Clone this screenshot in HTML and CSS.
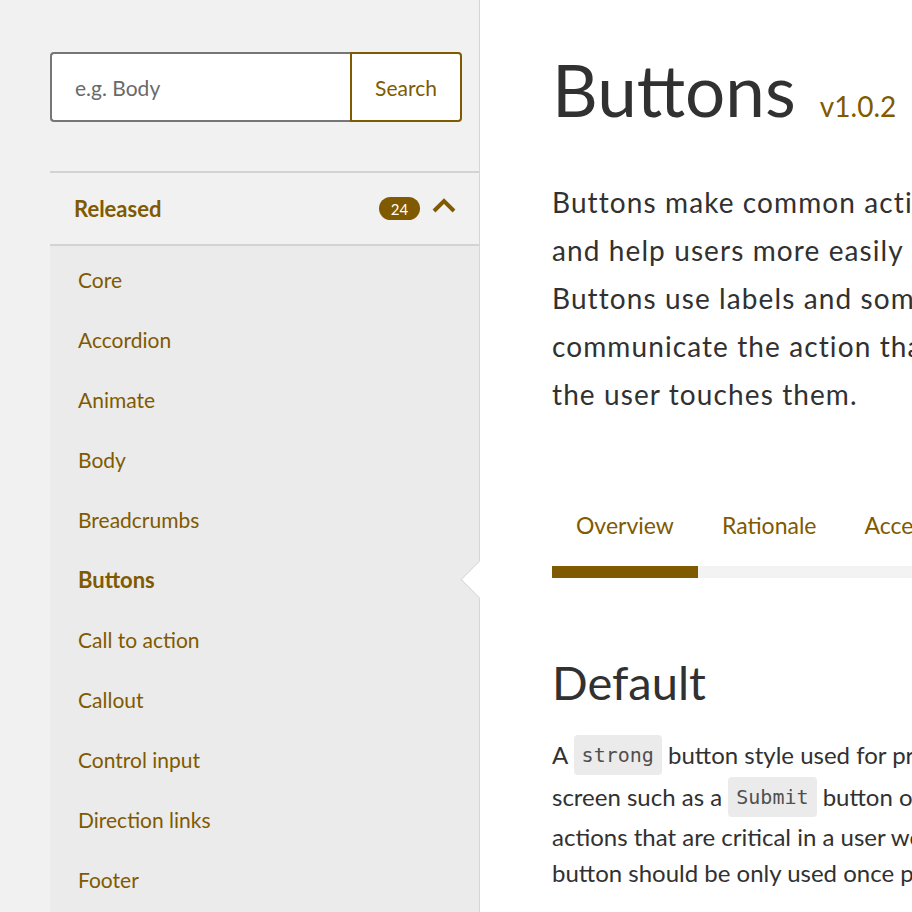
FILE: index.html
```html
<!DOCTYPE html>
<html lang="en">
<head>
<meta charset="utf-8">
<title>Buttons</title>
<link rel="stylesheet" href="styles.css">
</head>
<body>
<div class="page">
  <aside class="sidebar">
    <form class="search">
      <input class="search-input" type="text" placeholder="e.g. Body">
      <button class="search-btn" type="button">Search</button>
    </form>
    <nav class="nav">
      <div class="nav-head">
        <span class="nav-title">Released</span>
        <span class="badge">24</span>
        <svg class="chev" width="24" height="16" viewBox="0 0 24 16"><path d="M2 14 L12 4 L22 14" fill="none" stroke="#805a00" stroke-width="4"/></svg>
      </div>
      <ul class="nav-list">
        <li>Core</li>
        <li>Accordion</li>
        <li>Animate</li>
        <li>Body</li>
        <li>Breadcrumbs</li>
        <li class="active">Buttons</li>
        <li>Call to action</li>
        <li>Callout</li>
        <li>Control input</li>
        <li>Direction links</li>
        <li>Footer</li>
        <li>Grid 12</li>
        <li>Header</li>
      </ul>
    </nav>
  </aside>
  <main class="main">
    <h1 class="title">Buttons <span class="version">v1.0.2</span></h1>
    <p class="intro">Buttons make common actions more obvious<br>and help users more easily perform them.<br>Buttons use labels and sometimes icons to<br>communicate the action that will occur when<br>the user touches them.</p>
    <div class="tabs">
      <span class="tab active">Overview</span>
      <span class="tab">Rationale</span>
      <span class="tab">Accessibility</span>
    </div>
    <h2 class="h2">Default</h2>
    <p class="body">A <code>strong</code> button style used for primary actions on a<br>screen such as a <code>Submit</code> button or other important<br>actions that are critical in a user workflow. This<br>button should be only used once per page.</p>
  </main>
</div>
</body>
</html>
```

FILE: styles.css
```css
* { box-sizing: border-box; }
html, body { margin: 0; padding: 0; height: 100%; overflow: hidden; }
body {
  font-family: Lato, "Noto Sans", sans-serif;
  color: #313131;
  background: #fff;
}
.page { display: flex; height: 912px; }

.sidebar {
  width: 480px;
  flex: none;
  background: #f1f1f1;
  border-right: 1px solid #d6d6d6;
  padding: 52px 0 0 50px;
  position: relative;
  z-index: 1;
}
.search { display: flex; width: 412px; height: 70px; margin: 0 0 49px; }
.search-input {
  flex: 1;
  min-width: 0;
  border: 2px solid #767676;
  border-right: none;
  border-radius: 4px 0 0 4px;
  padding: 0 0 0 23px;
  font-family: Lato, "Noto Sans", sans-serif;
  font-size: 21px;
  color: #313131;
  background: #fff;
  outline: none;
}
.search-input::placeholder { color: #6a6a6a; }
.search-btn {
  width: 112px;
  flex: none;
  border: 2px solid #805a00;
  border-radius: 0 4px 4px 0;
  background: #fff;
  color: #805a00;
  font-family: Lato, "Noto Sans", sans-serif;
  font-size: 21px;
  padding: 0;
}

.nav-head {
  display: flex;
  align-items: center;
  height: 75px;
  border-top: 2px solid #d3d3d3;
  border-bottom: 2px solid #d3d3d3;
  padding: 0 23px 0 24px;
}
.nav-title { flex: 1; font-weight: 700; font-size: 22px; color: #805a00; }
.badge {
  width: 41px;
  height: 23px;
  border-radius: 12px;
  background: #805a00;
  color: #fff;
  font-size: 15px;
  display: flex;
  align-items: center;
  justify-content: center;
  margin-right: 12px;
}
.chev { display: block; margin-top: -8px; }

.nav-list {
  list-style: none;
  margin: 0;
  padding: 3px 0 0;
  background: #ebebeb;
}
.nav-list li {
  height: 60px;
  display: flex;
  align-items: center;
  padding-left: 28px;
  font-size: 21px;
  color: #805a00;
  position: relative;
}
.nav-list li.active { font-weight: 700; font-size: 22px; }
.nav-list li.active::after {
  content: "";
  position: absolute;
  width: 26px;
  height: 26px;
  right: -14px;
  top: 17px;
  background: #fff;
  border-left: 1px solid #d6d6d6;
  border-bottom: 1px solid #d6d6d6;
  transform: rotate(45deg);
}

.main {
  flex: 1;
  min-width: 0;
  padding: 47px 0 0 72px;
  white-space: nowrap;
}
.title {
  margin: 0 0 46px;
  font-size: 71px;
  font-weight: 400;
  line-height: 1.2;
  color: #313131;
}
.version { font-size: 28px; color: #805a00; margin-left: 6px; }
.intro {
  font-size: 28px;
  line-height: 48px;
  letter-spacing: 1.1px;
  margin: 0;
  color: #313131;
}

.tabs {
  display: flex;
  margin-top: 75px;
  border-bottom: 12px solid #f3f3f3;
}
.tab {
  padding: 16px 24px 24px;
  font-size: 23px;
  line-height: 33px;
  color: #805a00;
}
.tab.active { box-shadow: 0 12px 0 #805a00; }

.h2 {
  font-size: 47px;
  font-weight: 400;
  line-height: 60px;
  margin: 74px 0 23px;
  color: #313131;
}
.body { font-size: 24px; line-height: 36px; margin: 0; color: #313131; }
.body code {
  display: inline-block;
  vertical-align: 2px;
  margin-bottom: 2px;
  font-family: "DejaVu Sans Mono", "Liberation Mono", monospace;
  font-size: 20px;
  line-height: 24px;
  padding: 8px 8px;
  background: #ebebeb;
  border-radius: 4px;
  color: #505050;
}
```
